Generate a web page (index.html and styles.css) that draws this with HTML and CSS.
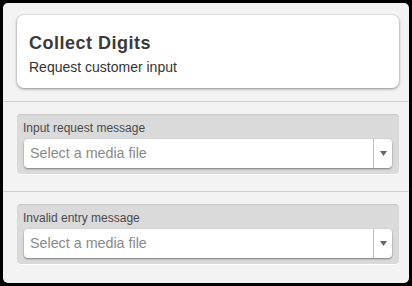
FILE: index.html
```html
<!DOCTYPE html>
<html>
<head>
<meta charset="utf-8">
<link rel="stylesheet" href="styles.css">
</head>
<body>
<div class="panel">
  <div class="header">
    <div class="card">
      <div class="title">Collect Digits</div>
      <div class="subtitle">Request customer input</div>
    </div>
  </div>
  <div class="section">
    <div class="field">
      <div class="label">Input request message</div>
      <div class="select">
        <span class="placeholder">Select a media file</span>
        <span class="caret"><svg width="7" height="5" viewBox="0 0 7 5"><path d="M0 0 H7 L3.5 5 Z" fill="#666"/></svg></span>
      </div>
    </div>
  </div>
  <div class="section">
    <div class="field">
      <div class="label">Invalid entry message</div>
      <div class="select">
        <span class="placeholder">Select a media file</span>
        <span class="caret"><svg width="7" height="5" viewBox="0 0 7 5"><path d="M0 0 H7 L3.5 5 Z" fill="#666"/></svg></span>
      </div>
    </div>
  </div>
</div>
</body>
</html>
```
FILE: styles.css
```css
* { box-sizing: border-box; }
html, body { margin: 0; padding: 0; }
body {
  background: #000;
  width: 412px;
  height: 286px;
  padding: 3px 3px 3px 3px;
  font-family: "Liberation Sans", Arial, sans-serif;
}
.panel {
  width: 406px;
  height: 280px;
  background: #f3f3f3;
  border-radius: 5px;
  overflow: hidden;
}
.header {
  padding: 12px 10px 13px 14px;
  border-bottom: 1px solid #cfcfcf;
}
.card {
  height: 73px;
  background: #fff;
  border-radius: 7px;
  padding: 18px 12px 0 12px;
  box-shadow: 0 1px 3px rgba(0,0,0,0.4), 0 0 0 1px rgba(0,0,0,0.04);
}
.title {
  font-size: 18px;
  line-height: 20px;
  font-weight: bold;
  letter-spacing: 0.5px;
  color: #3a3a3a;
  margin-bottom: 6px;
}
.subtitle {
  font-size: 14px;
  line-height: 16px;
  color: #333;
}
.section {
  padding: 12px 10px 17px 14px;
  border-bottom: 1px solid #cfcfcf;
}
.section:last-child { border-bottom: none; }
.field {
  background: #dadada;
  border-radius: 4px;
  padding: 7px 7px 6px 6px;
  box-shadow: inset 0 1px 1px rgba(0,0,0,0.08), 0 1px 0 rgba(255,255,255,0.8);
}
.label {
  font-size: 12px;
  line-height: 15px;
  color: #4a4a4a;
  margin-bottom: 3px;
}
.select {
  display: flex;
  align-items: stretch;
  height: 29px;
  margin-left: 1px;
  background: #fff;
  border-radius: 4px;
  box-shadow: 0 1px 2px rgba(0,0,0,0.45);
}
.placeholder {
  flex: 1;
  padding-left: 6px;
  font-size: 14.3px;
  line-height: 29px;
  color: #8a8a8a;
}
.caret {
  width: 19px;
  border-left: 1px solid #bdbdbd;
  display: flex;
  align-items: center;
  justify-content: center;
}
.caret svg { display: block; }
```
